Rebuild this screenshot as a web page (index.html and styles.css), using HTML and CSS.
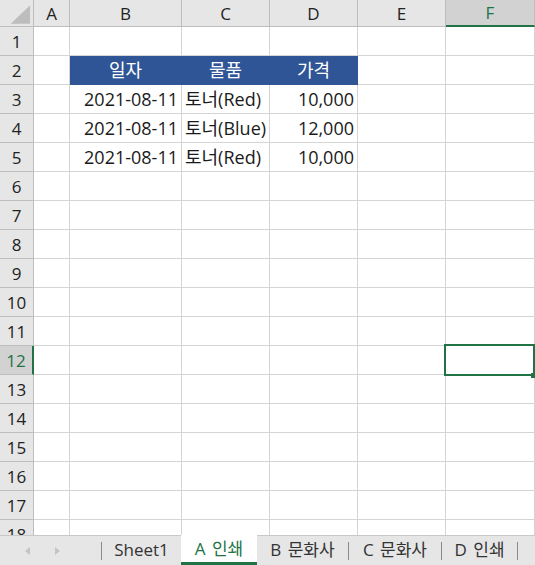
FILE: index.html
```html
<!doctype html>
<html>
    <head>
        <meta charset=utf-8>
        <title>Sheet</title>
        <link rel="stylesheet" href="styles.css">
    </head>
    <body>
        <div class="sheet">
            <div class="grid">
                <div class="hd corner">
                    <svg width="34" height="27" viewBox="0 0 34 27"><polygon points="31,5 31,24 11,24" fill="#bdbdbd"/></svg>
                </div>
                <div class="hd col">A</div>
                <div class="hd col">B</div>
                <div class="hd col">C</div>
                <div class="hd col">D</div>
                <div class="hd col">E</div>
                <div class="hd col sel">F</div>

                <div class="hd row">1</div>
                <div class="c"></div><div class="c"></div><div class="c"></div><div class="c"></div><div class="c"></div><div class="c"></div>

                <div class="hd row">2</div>
                <div class="c"></div>
                <div class="c th">일자</div>
                <div class="c th">물품</div>
                <div class="c th">가격</div>
                <div class="c"></div><div class="c"></div>

                <div class="hd row">3</div>
                <div class="c"></div>
                <div class="c r">2021-08-11</div>
                <div class="c l">토너(Red)</div>
                <div class="c r">10,000</div>
                <div class="c"></div><div class="c"></div>

                <div class="hd row">4</div>
                <div class="c"></div>
                <div class="c r">2021-08-11</div>
                <div class="c l">토너(Blue)</div>
                <div class="c r">12,000</div>
                <div class="c"></div><div class="c"></div>

                <div class="hd row">5</div>
                <div class="c"></div>
                <div class="c r">2021-08-11</div>
                <div class="c l">토너(Red)</div>
                <div class="c r">10,000</div>
                <div class="c"></div><div class="c"></div>

                <div class="hd row">6</div>
                <div class="c"></div><div class="c"></div><div class="c"></div><div class="c"></div><div class="c"></div><div class="c"></div>
                <div class="hd row">7</div>
                <div class="c"></div><div class="c"></div><div class="c"></div><div class="c"></div><div class="c"></div><div class="c"></div>
                <div class="hd row">8</div>
                <div class="c"></div><div class="c"></div><div class="c"></div><div class="c"></div><div class="c"></div><div class="c"></div>
                <div class="hd row">9</div>
                <div class="c"></div><div class="c"></div><div class="c"></div><div class="c"></div><div class="c"></div><div class="c"></div>
                <div class="hd row">10</div>
                <div class="c"></div><div class="c"></div><div class="c"></div><div class="c"></div><div class="c"></div><div class="c"></div>
                <div class="hd row">11</div>
                <div class="c"></div><div class="c"></div><div class="c"></div><div class="c"></div><div class="c"></div><div class="c"></div>
                <div class="hd row sel">12</div>
                <div class="c"></div><div class="c"></div><div class="c"></div><div class="c"></div><div class="c"></div><div class="c active"></div>
                <div class="hd row">13</div>
                <div class="c"></div><div class="c"></div><div class="c"></div><div class="c"></div><div class="c"></div><div class="c"></div>
                <div class="hd row">14</div>
                <div class="c"></div><div class="c"></div><div class="c"></div><div class="c"></div><div class="c"></div><div class="c"></div>
                <div class="hd row">15</div>
                <div class="c"></div><div class="c"></div><div class="c"></div><div class="c"></div><div class="c"></div><div class="c"></div>
                <div class="hd row">16</div>
                <div class="c"></div><div class="c"></div><div class="c"></div><div class="c"></div><div class="c"></div><div class="c"></div>
                <div class="hd row">17</div>
                <div class="c"></div><div class="c"></div><div class="c"></div><div class="c"></div><div class="c"></div><div class="c"></div>
                <div class="hd row">18</div>
                <div class="c"></div><div class="c"></div><div class="c"></div><div class="c"></div><div class="c"></div><div class="c"></div>
            </div>
        </div>

        <div class="tabs">
            <div class="nav">
                <svg width="8" height="10" viewBox="0 0 8 10"><polygon points="6,1 6,9 1,5" fill="#c4c4c4"/></svg>
                <svg width="8" height="10" viewBox="0 0 8 10"><polygon points="2,1 2,9 7,5" fill="#c4c4c4"/></svg>
            </div>
            <span class="sep"></span>
            <div class="tab w79">Sheet1</div>
            <div class="tab w76 on">A 인쇄</div>
            <div class="tab w91">B 문화사</div>
            <span class="sep"></span>
            <div class="tab w92">C 문화사</div>
            <span class="sep"></span>
            <div class="tab w75">D 인쇄</div>
            <span class="sep"></span>
        </div>
    </body>
</html>
```

FILE: styles.css
```css
:root {
  --grid: #d4d4d4;
  --head: #e6e6e6;
  --headLine: #bdbdbd;
  --headSel: #d2d2d2;
  --green: #217346;
  --blue: #2f5597;
}

* {
  margin: 0;
  padding: 0;
  box-sizing: border-box;
}

body {
  width: 535px;
  height: 565px;
  overflow: hidden;
  background: #fff;
  font: 17px/1 "Open Sans", "Noto Sans CJK KR", sans-serif;
  color: #1a1a1a;
}

.sheet {
  height: 535px;
  overflow: hidden;
}

.grid {
  display: grid;
  grid-template-columns: 34px 36px 112px 88px 88px 88px 89px;
  grid-template-rows: 27px;
  grid-auto-rows: 29px;
}

.hd {
  background: var(--head);
  display: flex;
  align-items: center;
  justify-content: center;
  border-right: 1px solid var(--headLine);
  border-bottom: 1px solid var(--headLine);
  color: #222;
}

.corner {
  justify-content: flex-start;
  align-items: flex-start;
}

.hd.col.sel {
  background: var(--headSel);
  color: var(--green);
  border-bottom: 2px solid var(--green);
}

.hd.row.sel {
  background: var(--headSel);
  color: var(--green);
  border-right: 2px solid var(--green);
}

.c {
  border-right: 1px solid var(--grid);
  border-bottom: 1px solid var(--grid);
  display: flex;
  align-items: center;
  white-space: nowrap;
  font-size: 18px;
}

.c.r {
  justify-content: flex-end;
  padding-right: 3px;
}

.c.l {
  padding-left: 3px;
}

.c.th {
  background: var(--blue);
  color: #fff;
  justify-content: center;
  border-color: var(--blue);
}

.active {
  position: relative;
}

.active::before {
  content: "";
  position: absolute;
  left: -2px;
  top: -2px;
  right: -1px;
  bottom: -2px;
  border: 2px solid var(--green);
}

.active::after {
  content: "";
  position: absolute;
  right: -2px;
  bottom: -4px;
  width: 5px;
  height: 5px;
  background: var(--green);
}

.tabs {
  height: 30px;
  background: #e6e6e6;
  border-top: 1px solid #c8c8c8;
  display: flex;
  align-items: stretch;
  font-size: 17px;
  color: #333;
}

.nav {
  width: 101px;
  display: flex;
  align-items: center;
  gap: 21px;
  padding-left: 24px;
}

.sep {
  width: 1px;
  background: #8a8a8a;
  margin: 6px 0 5px;
}

.tab {
  display: flex;
  align-items: center;
  justify-content: center;
  padding-bottom: 3px;
  word-spacing: 2px;
}

.w75 { width: 75px; }
.w76 { width: 76px; }
.w79 { width: 79px; }
.w91 { width: 91px; }
.w92 { width: 92px; }

.tab.on {
  background: #fff;
  color: var(--green);
  border-bottom: 3px solid var(--green);
  padding-bottom: 0;
  margin-top: -1px;
}
```
